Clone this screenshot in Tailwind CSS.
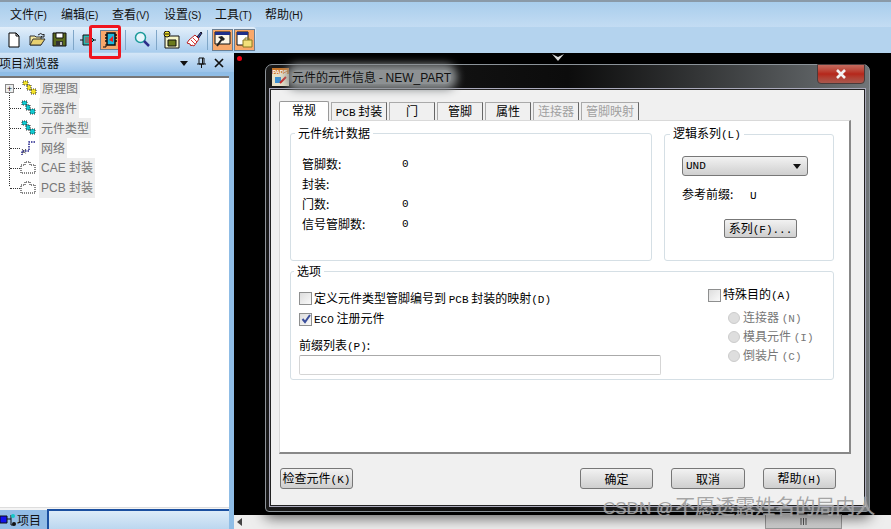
<!DOCTYPE html>
<html lang="zh">
<head>
    <meta charset="UTF-8">
    <title>PADS Logic</title>
    <script src="https://cdn.jsdelivr.net/npm/@tailwindcss/browser@4"></script>
</head>
<body class="m-0 overflow-hidden">
<div class="relative w-[891px] h-[529px] overflow-hidden flex flex-col bg-[#b4d3ee] text-[12px] leading-[14px] text-black font-['Noto_Sans_CJK_SC','Noto_Sans',sans-serif]">

    <!-- menu bar -->
    <div class="h-[27px] shrink-0 bg-gradient-to-b from-[#a8cdec] to-[#c3dcf3] border-t-2 border-[#8a9aa8] flex items-center pl-[10px] gap-[12px] text-[#111]">
        <span class="w-[39px] whitespace-nowrap">文件<span class="text-[10px] font-['Liberation_Sans']">(F)</span></span>
        <span class="w-[39px] whitespace-nowrap">编辑<span class="text-[10px] font-['Liberation_Sans']">(E)</span></span>
        <span class="w-[40px] whitespace-nowrap">查看<span class="text-[10px] font-['Liberation_Sans']">(V)</span></span>
        <span class="w-[39px] whitespace-nowrap">设置<span class="text-[10px] font-['Liberation_Sans']">(S)</span></span>
        <span class="w-[38px] whitespace-nowrap">工具<span class="text-[10px] font-['Liberation_Sans']">(T)</span></span>
        <span class="whitespace-nowrap">帮助<span class="text-[10px] font-['Liberation_Sans']">(H)</span></span>
    </div>

    <!-- toolbar -->
    <div class="h-[25px] shrink-0 bg-gradient-to-b from-[#e3effa] to-[#a9cdee] flex items-center pl-[7px] w-[256px] rounded-r-[3px]">
        <svg width="14" height="16" viewBox="0 0 14 16" class="mr-[8px]"><path d="M2 1h7l3 3v11H2z" fill="#fff" stroke="#000"/><path d="M9 1v3h3" fill="none" stroke="#000"/></svg>
        <svg width="17" height="15" viewBox="0 0 17 15" class="mr-[6px]"><path d="M1 4h5l1 1h5v8H1z" fill="#f5e9a0" stroke="#333"/><path d="M1 13l3-6h12l-4 6z" fill="#e8d070" stroke="#333"/><path d="M9 3q3-3 5 0l1-1v3h-3l1-1" fill="none" stroke="#222"/></svg>
        <svg width="15" height="15" viewBox="0 0 15 15" class="mr-[6px]"><path d="M1 1h13v13H1z" fill="#5a6a1c" stroke="#111"/><path d="M4 1h7v5H4z" fill="#fff" stroke="#111"/><path d="M4 9h7v5H4z" fill="#333"/><path d="M8 10h2v3H8z" fill="#bbb"/></svg>
        <span class="w-px h-[20px] bg-[#7fa6c8] mr-[6px]"></span>
        <svg width="17" height="15" viewBox="0 0 17 15" class="mr-[3px]"><path d="M0 8h3M13 8h3" stroke="#111"/><path d="M3 3h6l5 5-5 5H3z" fill="#2db7b0" stroke="#111"/><path d="M5 5h4v6H5z" fill="#777"/></svg>
        <div class="w-[19px] h-[20px] bg-[#f9a86a] border border-[#6b7f93] flex items-center justify-center mr-[6px]">
            <svg width="16" height="18" viewBox="0 0 16 18"><path d="M5 2h8v12H5z" fill="#1fb7dd" stroke="#111" stroke-width="1.5"/><path d="M3 4h2M3 7h2M3 10h2M13 4h2M13 7h2M13 10h2" stroke="#111" stroke-width="1.5"/><path d="M7 9l4-4v6z" fill="#e22"/><path d="M1 16h3v-3" fill="none" stroke="#111"/></svg>
        </div>
        <span class="w-px h-[20px] bg-[#7fa6c8] mr-[8px]"></span>
        <svg width="16" height="17" viewBox="0 0 16 17" class="mr-[6px]"><circle cx="6.5" cy="6.5" r="5" fill="#e8f6fb" stroke="#1b9a9a" stroke-width="1.5"/><path d="M10 10l5 5" stroke="#2d2d8a" stroke-width="2.5"/></svg>
        <span class="w-px h-[20px] bg-[#7fa6c8] mr-[6px]"></span>
        <svg width="17" height="18" viewBox="0 0 17 18" class="mr-[6px]"><path d="M2 5h14v12H2z" fill="#f5f5c8" stroke="#111"/><path d="M5 9h8v6H5z" fill="#6b7a1c" stroke="#111"/><circle cx="4" cy="3" r="3" fill="#f4e32c" stroke="#111"/><path d="M2 3h4" stroke="#111"/></svg>
        <svg width="17" height="17" viewBox="0 0 17 17" class="mr-[4px]"><path d="M11 6l4-5 1 1-4 6z" fill="#3a4fb5" stroke="#112"/><path d="M3 9l6-5 4 4-5 7-2-1-1 1-1-2-3-1z" fill="#fff" stroke="#b22"/><path d="M5 9l4 4M7 7l4 4" stroke="#d33"/></svg>
        <span class="w-px h-[20px] bg-[#7fa6c8] mr-[4px]"></span>
        <div class="w-[21px] h-[22px] bg-[#f9a86a] border border-[#6b7f93] flex items-center justify-center mr-px">
            <svg width="17" height="17" viewBox="0 0 17 17"><path d="M1 1h15v12H1z" fill="#fdf6e8" stroke="#111"/><path d="M1 1h15v3H1z" fill="#1f2f8a"/><path d="M4 6l4-1 3 3-2 2z" fill="#222"/><path d="M8 8l-5 7" stroke="#222" stroke-width="2"/></svg>
        </div>
        <div class="w-[21px] h-[22px] bg-[#f9a86a] border border-[#6b7f93] flex items-center justify-center">
            <svg width="17" height="17" viewBox="0 0 17 17"><path d="M1 1h11v13H1z" fill="#fff" stroke="#111"/><path d="M1 1h11v3H1z" fill="#1f2f8a"/><path d="M7 9h9v7H7z" fill="#f3e07a" stroke="#8a7a22"/><path d="M9 9V7h4v2" fill="none" stroke="#8a7a22"/></svg>
        </div>
    </div>

    <div class="flex-1 flex min-h-0 pt-[2px] -mt-px">
        <!-- project browser -->
        <aside class="w-[234px] shrink-0 flex flex-col bg-[#8fbde6] pr-[5px]">
            <div class="h-[19px] shrink-0 -mr-[5px] bg-gradient-to-b from-[#d4e6f7] to-[#9cc4ea] flex items-center -ml-[2px] pr-[9px] text-[#111]">
                <span class="flex-1 whitespace-nowrap pl-px">项目浏览器</span>
                <svg width="12" height="12" viewBox="0 0 12 12" class="mr-[6px]"><path d="M2 4h8l-4 5z" fill="#111"/></svg>
                <svg width="11" height="12" viewBox="0 0 11 12" class="mr-[6px]"><path d="M3 1h5v6H3zM1 7h9M5.500 7v4M6.500 1v6" fill="none" stroke="#111"/></svg>
                <svg width="12" height="12" viewBox="0 0 12 12"><path d="M2 2l8 8M10 2l-8 8" stroke="#111" stroke-width="1.700"/></svg>
            </div>
            <div class="flex-1 bg-white border-t-2 border-[#777] mt-[4px] relative text-[#777]">
                <!-- tree guide line -->
                <div class="absolute left-[9px] top-[8px] h-[100px] border-l border-dotted border-[#333]"></div>
                <div class="h-[20px] flex items-center relative">
                    <span class="absolute left-[5px] w-[9px] h-[9px] border border-[#888] bg-[#eee] text-[9px] leading-[7px] text-center text-[#111]">+</span>
                    <span class="w-[7px] ml-[14px] border-t border-dotted border-[#333]"></span>
                    <svg width="15" height="16" viewBox="0 0 15 16" class="ml-px mr-[3px]"><path d="M1 1h5v4H1zM5 5h4v5H5zM9 9h5v5H9z" fill="#f4e32c" stroke="#333" stroke-dasharray="1 1"/></svg>
                    <span class="bg-[#eee] h-[20px] leading-[20px] px-[2px]">原理图</span>
                </div>
                <div class="h-[20px] flex items-center">
                    <span class="w-[11px] ml-[10px] border-t border-dotted border-[#333]"></span>
                    <svg width="15" height="16" viewBox="0 0 15 16" class="mr-[3px]"><path d="M1 1h5v4H1zM5 5h4v5H5zM9 9h5v5H9z" fill="#12c8cf" stroke="#333" stroke-dasharray="1 1"/></svg>
                    <span class="bg-[#eee] h-[20px] leading-[20px] px-[2px]">元器件</span>
                </div>
                <div class="h-[20px] flex items-center">
                    <span class="w-[11px] ml-[10px] border-t border-dotted border-[#333]"></span>
                    <svg width="15" height="16" viewBox="0 0 15 16" class="mr-[3px]"><path d="M1 1h5v4H1zM5 5h4v5H5zM9 9h5v5H9z" fill="#12c8cf" stroke="#333" stroke-dasharray="1 1"/></svg>
                    <span class="bg-[#eee] h-[20px] leading-[20px] px-[2px]">元件类型</span>
                </div>
                <div class="h-[20px] flex items-center">
                    <span class="w-[10px] ml-[10px] border-t border-dotted border-[#333]"></span>
                    <svg width="16" height="16" viewBox="0 0 16 16" class="mr-[3px]"><path d="M15 2H9v9H2v4" fill="none" stroke="#22228a" stroke-width="1.500" stroke-dasharray="1.500 1"/><path d="M2 9l4 5M6 9l-4 5" stroke="#111" stroke-dasharray="1 1"/></svg>
                    <span class="bg-[#eee] h-[20px] leading-[20px] px-[2px]">网络</span>
                </div>
                <div class="h-[20px] flex items-center">
                    <span class="w-[10px] ml-[10px] border-t border-dotted border-[#333]"></span>
                    <svg width="16" height="14" viewBox="0 0 16 14" class="mr-[3px]"><path d="M1 4h4V1h5v3h5v8H1z" fill="none" stroke="#111" stroke-dasharray="1 1"/></svg>
                    <span class="bg-[#eee] h-[20px] leading-[20px] px-[2px] whitespace-nowrap font-['Liberation_Sans','Noto_Sans_CJK_SC']">CAE 封装</span>
                </div>
                <div class="h-[20px] flex items-center">
                    <span class="w-[10px] ml-[10px] border-t border-dotted border-[#333]"></span>
                    <svg width="16" height="14" viewBox="0 0 16 14" class="mr-[3px]"><path d="M1 4h4V1h5v3h5v8H1z" fill="none" stroke="#111" stroke-dasharray="1 1"/></svg>
                    <span class="bg-[#eee] h-[20px] leading-[20px] px-[2px] whitespace-nowrap font-['Liberation_Sans','Noto_Sans_CJK_SC']">PCB 封装</span>
                </div>
                <!-- bottom tab strip -->
                <div class="absolute left-0 right-0 bottom-0 h-[22px] flex items-end border-t border-[#ddd] bg-[#f4f4f4]">
                    <div class="w-[47px] h-[19px] shrink-0 bg-[#93bde6] flex items-center text-[#111]">
                        <svg width="17" height="14" viewBox="0 0 17 14"><path d="M0 3h7v7H0z" fill="#1111ee" stroke="#111"/><path d="M7 6h4M11 2v10h3" fill="none" stroke="#111"/><circle cx="13" cy="3" r="2" fill="#14c8c8"/><circle cx="14" cy="11" r="2" fill="#111"/></svg>
                        <span>项目</span>
                    </div>
                    <div class="flex-1 h-[20px] bg-gradient-to-b from-[#dcebf8] to-[#bcd7ef] border-t-2 border-l-2 border-[#1a4fa0]"></div>
                </div>
            </div>
        </aside>

        <!-- design canvas -->
        <main class="flex-1 flex flex-col min-w-0 relative">
            <div class="flex-1 bg-black relative">
                <span class="absolute left-[3px] top-[3px] w-[5px] h-[5px] rounded-full bg-[#f00010]"></span>
                <svg width="14" height="9" viewBox="0 0 14 9" class="absolute left-[317px] top-0"><path d="M1 1l6 3 6-3-6 7z" fill="#ddd"/></svg>
            </div>
            <div class="h-[14px] shrink-0 bg-[#eeeeee] flex items-center relative">
                <svg width="6" height="8" viewBox="0 0 6 8" class="ml-[3px]"><path d="M5 0v8L0 4z" fill="#444"/></svg>
                <div class="absolute left-[531px] top-[-1px] w-[77px] h-[15px] bg-gradient-to-b from-[#eee] to-[#ccc] border border-[#999] flex items-center justify-center">
                    <svg width="7" height="7" viewBox="0 0 7 7"><path d="M1 0v7M3.500 0v7M6 0v7" stroke="#555"/></svg>
                </div>
            </div>
        </main>
    </div>

    <!-- component dialog -->
    <div class="absolute left-[265px] top-[64px] w-[605px] h-[448px] rounded-t-[7px] rounded-b-[4px] border border-[#8b9298] bg-gradient-to-r from-[#1a1a1a] via-[#0c0c0c] to-[#707578] shadow-[0_6px_14px_rgba(0,0,0,0.6)] flex flex-col px-[4px] pb-[5px]">
        <div class="h-[24px] shrink-0 flex items-center pl-[2px] relative">
            <svg width="17" height="18" viewBox="0 0 17 18" class="mr-[3px]"><path d="M0 0h17v18H0z" fill="#c8762a"/><path d="M0 6h17v12H0z" fill="#e8e2c8"/><path d="M3 9h6v6H3z" fill="#3b8fd0"/><path d="M8 15l6-6" stroke="#c22" stroke-width="2"/><text x="0.500" y="5.500" font-size="5.500" font-weight="700" fill="#fff" font-family="Liberation Sans">PADS</text></svg>
            <span class="whitespace-nowrap text-[#111] bg-[#8d9193] shadow-[0_0_8px_6px_#8d9193] rounded-[6px] h-[14px]">元件的元件信息 - <span class="font-['Liberation_Sans']">NEW_PART</span></span>
            <div class="absolute right-[0px] top-[-1px] w-[48px] h-[20px] rounded-b-[4px] bg-gradient-to-b from-[#c46a5e] via-[#b5261a] to-[#a8584e] border border-[#4a3a3a] flex items-center justify-center">
                <svg width="12" height="10" viewBox="0 0 12 10"><path d="M2 1l8 8M10 1l-8 8" stroke="#f2f2f2" stroke-width="2.600"/></svg>
            </div>
        </div>
        <div class="flex-1 bg-[#f0f0f0] border border-[#222] outline outline-1 outline-[#aab] flex flex-col pl-[8px] pr-[13px] pt-[11px] min-h-0">
            <!-- tabs -->
            <div class="flex items-end h-[19px] gap-[2px] shrink-0 relative z-10 text-[12px]">
                <div class="w-[50px] h-[20px] -mb-px bg-white border border-b-0 border-[#999] rounded-t-[2px] text-center leading-[16px]">常规</div>
                <div class="w-[56px] h-[18px] bg-[#f0f0f0] border border-[#aaa] border-r-[#666] border-b-0 text-center leading-[16px] whitespace-nowrap"><span class="font-['Liberation_Mono'] text-[11px]">PCB</span> 封装</div>
                <div class="w-[46px] h-[18px] bg-[#f0f0f0] border border-[#aaa] border-r-[#666] border-b-0 text-center leading-[16px]">门</div>
                <div class="w-[46px] h-[18px] bg-[#f0f0f0] border border-[#aaa] border-r-[#666] border-b-0 text-center leading-[16px]">管脚</div>
                <div class="w-[46px] h-[18px] bg-[#f0f0f0] border border-[#aaa] border-r-[#666] border-b-0 text-center leading-[16px]">属性</div>
                <div class="w-[46px] h-[18px] bg-[#f0f0f0] border border-[#aaa] border-r-[#666] border-b-0 text-center leading-[16px] text-[#a0a0a0]">连接器</div>
                <div class="w-[58px] h-[18px] bg-[#f0f0f0] border border-[#aaa] border-r-[#666] border-b-0 text-center leading-[16px] text-[#a0a0a0]">管脚映射</div>
            </div>
            <!-- page -->
            <div class="h-[334px] shrink-0 bg-white border border-[#d9d9d9] border-r-2 border-r-[#888] border-b-2 border-b-[#888] px-[10px] pt-[5px] flex flex-col gap-[3px]">
                <div class="flex gap-[12px] h-[135px] shrink-0">
                    <fieldset class="w-[362px] border border-[#d5dfe5] rounded-[3px] pl-[11px] m-0">
                        <legend class="-ml-[7px] px-[3px] leading-[14px]">元件统计数据</legend>
                        <div class="grid grid-cols-[100px_1fr] auto-rows-[20px] items-center mt-[14px]">
                            <span>管脚数:</span><span class="font-['Liberation_Mono'] text-[11px]">0</span>
                            <span>封装:</span><span></span>
                            <span>门数:</span><span class="font-['Liberation_Mono'] text-[11px]">0</span>
                            <span>信号管脚数:</span><span class="font-['Liberation_Mono'] text-[11px]">0</span>
                        </div>
                    </fieldset>
                    <fieldset class="w-[170px] border border-[#d5dfe5] rounded-[3px] pl-[17px] m-0">
                        <legend class="-ml-[12px] px-[3px] leading-[14px] whitespace-nowrap">逻辑系列<span class="font-['Liberation_Mono'] text-[11px]">(L)</span></legend>
                        <div class="w-[126px] h-[20px] mt-[14px] rounded-[3px] border border-[#777] bg-gradient-to-b from-[#f2f2f2] to-[#cfcfcf] flex items-center justify-between pl-[3px] pr-[6px] font-['Liberation_Mono'] text-[11px]">
                            <span>UND</span><svg width="8" height="5" viewBox="0 0 8 5"><path d="M0 0h8L4 5z" fill="#111"/></svg>
                        </div>
                        <div class="mt-[11px] whitespace-nowrap"><span class="inline-block w-[68px]">参考前缀:</span><span class="font-['Liberation_Mono'] text-[11px]">U</span></div>
                        <button class="block ml-[42px] mt-[16px] w-[73px] h-[19px] rounded-[2px] border border-[#777] bg-gradient-to-b from-[#f2f2f2] to-[#cfcfcf] whitespace-nowrap text-center leading-[16px]">系列<span class="font-['Liberation_Mono'] text-[11px]">(F)...</span></button>
                    </fieldset>
                </div>
                <fieldset class="h-[116px] shrink-0 w-[544px] border border-[#d5dfe5] rounded-[3px] m-0 px-[8px] flex justify-between">
                    <legend class="-ml-[5px] px-[3px] leading-[14px]">选项</legend>
                    <div class="w-[362px]">
                        <label class="flex items-center h-[21px] mt-[10px] whitespace-nowrap">
                            <span class="w-[13px] h-[13px] mr-[2px] border border-[#8e8f8f] bg-gradient-to-br from-[#ddd] to-[#fafafa] shrink-0"></span>
                            <span>定义元件类型管脚编号到 <span class="font-['Liberation_Mono'] text-[11px]">PCB</span> 封装的映射<span class="font-['Liberation_Mono'] text-[11px]">(D)</span></span>
                        </label>
                        <label class="flex items-center h-[20px] whitespace-nowrap">
                            <span class="w-[13px] h-[13px] mr-[2px] border border-[#8e8f8f] bg-gradient-to-br from-[#ddd] to-[#fafafa] shrink-0 flex items-center justify-center">
                                <svg width="10" height="10" viewBox="0 0 10 10"><path d="M1.500 5l2.500 3 5-7" fill="none" stroke="#3b4f9c" stroke-width="2"/></svg>
                            </span>
                            <span><span class="font-['Liberation_Mono'] text-[11px]">ECO</span> 注册元件</span>
                        </label>
                        <div class="mt-[9px] leading-[14px] whitespace-nowrap">前缀列表<span class="font-['Liberation_Mono'] text-[11px]">(P)</span>:</div>
                        <div class="w-[362px] h-[20px] mt-px border border-[#d5d5d5] border-t-[#aaa] rounded-[2px] bg-white"></div>
                    </div>
                    <div class="w-[117px] pt-[7px]">
                        <label class="flex items-center h-[20px] whitespace-nowrap">
                            <span class="w-[13px] h-[13px] mr-[2px] border border-[#8e8f8f] bg-gradient-to-br from-[#ddd] to-[#fafafa] shrink-0"></span>
                            <span>特殊目的<span class="font-['Liberation_Mono'] text-[11px]">(A)</span></span>
                        </label>
                        <div class="pl-[20px] text-[#777] mt-[4px]">
                            <label class="flex items-center h-[18px] whitespace-nowrap"><span class="w-[12px] h-[12px] rounded-full mr-[3px] border border-[#ccc] bg-[#dedede] shrink-0"></span><span>连接器 <span class="font-['Liberation_Mono'] text-[11px]">(N)</span></span></label>
                            <label class="flex items-center h-[19px] whitespace-nowrap"><span class="w-[12px] h-[12px] rounded-full mr-[3px] border border-[#ccc] bg-[#dedede] shrink-0"></span><span>模具元件 <span class="font-['Liberation_Mono'] text-[11px]">(I)</span></span></label>
                            <label class="flex items-center h-[19px] whitespace-nowrap"><span class="w-[12px] h-[12px] rounded-full mr-[3px] border border-[#ccc] bg-[#dedede] shrink-0"></span><span>倒装片 <span class="font-['Liberation_Mono'] text-[11px]">(C)</span></span></label>
                        </div>
                    </div>
                </fieldset>
            </div>
            <!-- footer buttons -->
            <div class="flex items-center mt-[14px] ml-[1px] mr-[15px]">
                <button class="w-[73px] h-[21px] rounded-[3px] border border-[#777] bg-gradient-to-b from-[#f2f2f2] to-[#cfcfcf] whitespace-nowrap leading-[18px]">检查元件<span class="font-['Liberation_Mono'] text-[11px]">(K)</span></button>
                <button class="ml-auto w-[73px] h-[21px] rounded-[3px] border border-[#777] bg-gradient-to-b from-[#f2f2f2] to-[#cfcfcf] leading-[18px]">确定</button>
                <button class="ml-[18px] w-[74px] h-[21px] rounded-[3px] border border-[#777] bg-gradient-to-b from-[#f2f2f2] to-[#cfcfcf] leading-[18px]">取消</button>
                <button class="ml-[18px] w-[73px] h-[21px] rounded-[3px] border border-[#777] bg-gradient-to-b from-[#f2f2f2] to-[#cfcfcf] whitespace-nowrap leading-[18px]">帮助<span class="font-['Liberation_Mono'] text-[11px]">(H)</span></button>
            </div>
        </div>
    </div>

    <!-- red highlight around the toolbar button -->
    <div class="absolute left-[89px] top-[25px] w-[32px] h-[34px] border-[3px] border-[#f0141e] rounded-[3px]"></div>

    <!-- watermark -->
    <div class="absolute left-[603px] top-[495px] text-[20px] leading-[24px] whitespace-nowrap text-[#9a9a9a]/90 [text-shadow:0_0_1px_rgba(255,255,255,0.5)] font-['Liberation_Sans','Noto_Sans_CJK_SC',sans-serif]"><span class="text-[17px] mr-[2px]">CSDN @</span>不愿透露姓名的局内人</div>
</div>
</body>
</html>
